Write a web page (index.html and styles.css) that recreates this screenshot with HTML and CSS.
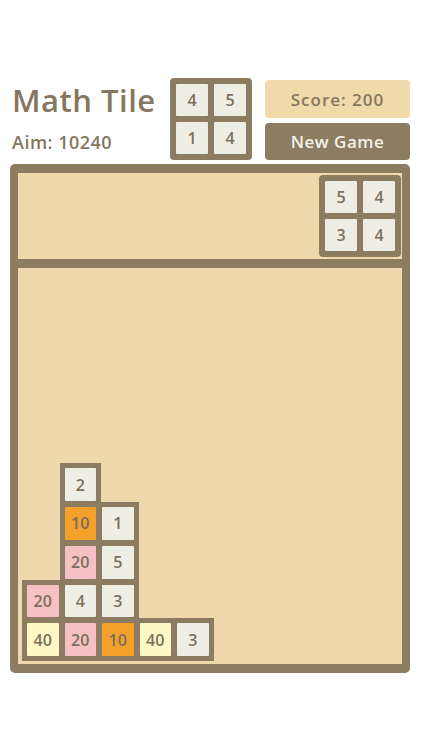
FILE: index.html
```html
<!DOCTYPE html>
<html>
<head>
<meta charset="utf-8">
<link rel="stylesheet" href="styles.css">
</head>
<body>
<div class="app">
  <header class="header">
    <div class="titles">
      <h1 class="title">Math Tile</h1>
      <div class="aim">Aim: 10240</div>
    </div>
    <div class="piece">
      <div class="tile t-plain">4</div>
      <div class="tile t-plain">5</div>
      <div class="tile t-plain">1</div>
      <div class="tile t-plain">4</div>
    </div>
    <div class="actions">
      <div class="score">Score: 200</div>
      <button class="new-game">New Game</button>
    </div>
  </header>
  <main class="board">
    <div class="next-area">
      <div class="piece">
        <div class="tile t-plain">5</div>
        <div class="tile t-plain">4</div>
        <div class="tile t-plain">3</div>
        <div class="tile t-plain">4</div>
      </div>
    </div>
    <div class="play">
      <div class="cell r6 c2"><div class="tile t-plain">2</div></div>
      <div class="cell r7 c2"><div class="tile t-orange">10</div></div>
      <div class="cell r7 c3"><div class="tile t-plain">1</div></div>
      <div class="cell r8 c2"><div class="tile t-pink">20</div></div>
      <div class="cell r8 c3"><div class="tile t-plain">5</div></div>
      <div class="cell r9 c1"><div class="tile t-pink">20</div></div>
      <div class="cell r9 c2"><div class="tile t-plain">4</div></div>
      <div class="cell r9 c3"><div class="tile t-plain">3</div></div>
      <div class="cell r10 c1"><div class="tile t-yellow">40</div></div>
      <div class="cell r10 c2"><div class="tile t-pink">20</div></div>
      <div class="cell r10 c3"><div class="tile t-orange">10</div></div>
      <div class="cell r10 c4"><div class="tile t-yellow">40</div></div>
      <div class="cell r10 c5"><div class="tile t-plain">3</div></div>
    </div>
  </main>
</div>
</body>
</html>
```

FILE: styles.css
```css
* { box-sizing: border-box; }
html, body { margin: 0; padding: 0; background: #ffffff; }
body {
  font-family: "Open Sans", "DejaVu Sans", sans-serif;
  color: #857660;
}
.app {
  width: 422px;
  height: 750px;
  padding: 78px 12px 0 10px;
}
.header {
  display: flex;
  align-items: flex-start;
  height: 82px;
}
.titles {
  width: 160px;
  padding-left: 2px;
}
.title {
  margin: 0;
  font-size: 31px;
  font-weight: 600;
  line-height: 44px;
  color: #857660;
  letter-spacing: 0.5px;
}
.aim {
  margin-top: 9px;
  font-size: 18px;
  font-weight: 600;
  line-height: 22px;
  letter-spacing: 0.5px;
}
.piece {
  display: grid;
  grid-template-columns: 32px 32px;
  grid-template-rows: 32px 32px;
  gap: 6px;
  padding: 6px;
  width: 82px;
  height: 82px;
  background: #8b7c62;
  border-radius: 4px;
}
.tile {
  display: flex;
  align-items: center;
  justify-content: center;
  width: 100%;
  height: 100%;
  font-size: 16px;
  font-weight: 600;
  color: #7d6f5b;
  border-radius: 1px;
}
.t-plain { background: #efeee4; }
.t-orange { background: #f4a12c; }
.t-pink { background: #f6c1c5; }
.t-yellow { background: #fdf8c6; }
.actions {
  margin-left: 13px;
  width: 145px;
  display: flex;
  flex-direction: column;
  gap: 5px;
  padding-top: 2px;
}
.score {
  height: 38px;
  background: #f0d9aa;
  border-radius: 4px;
  display: flex;
  align-items: center;
  justify-content: center;
  font-size: 17px;
  font-weight: 600;
  letter-spacing: 1px;
  color: #857660;
}
.new-game {
  height: 37px;
  border: none;
  background: #8b7c62;
  border-radius: 4px;
  color: #f6f2e8;
  font-family: inherit;
  font-size: 17px;
  font-weight: 600;
  letter-spacing: 0.5px;
  padding: 0;
}
.board {
  margin-top: 4px;
  width: 400px;
  height: 509px;
  background: #8b7c62;
  border-radius: 5px;
  padding: 9px 8px;
  display: flex;
  flex-direction: column;
  gap: 9px;
}
.next-area {
  height: 86px;
  background: #efd8ab;
  display: flex;
  justify-content: flex-end;
  padding: 2px 1px 0 0;
}
.play {
  flex: 1;
  background: #efd8ab;
  display: grid;
  grid-template-columns: repeat(10, 37.5px);
  grid-template-rows: repeat(10, 38.75px);
  align-content: end;
  padding: 0 0 5px 6px;
}
.cell {
  background: #8b7c62;
  padding: 3px;
  box-shadow: 0 0 0 2px #8b7c62;
}
.r6 { grid-row: 6; }
.r7 { grid-row: 7; }
.r8 { grid-row: 8; }
.r9 { grid-row: 9; }
.r10 { grid-row: 10; }
.c1 { grid-column: 1; }
.c2 { grid-column: 2; }
.c3 { grid-column: 3; }
.c4 { grid-column: 4; }
.c5 { grid-column: 5; }
```
